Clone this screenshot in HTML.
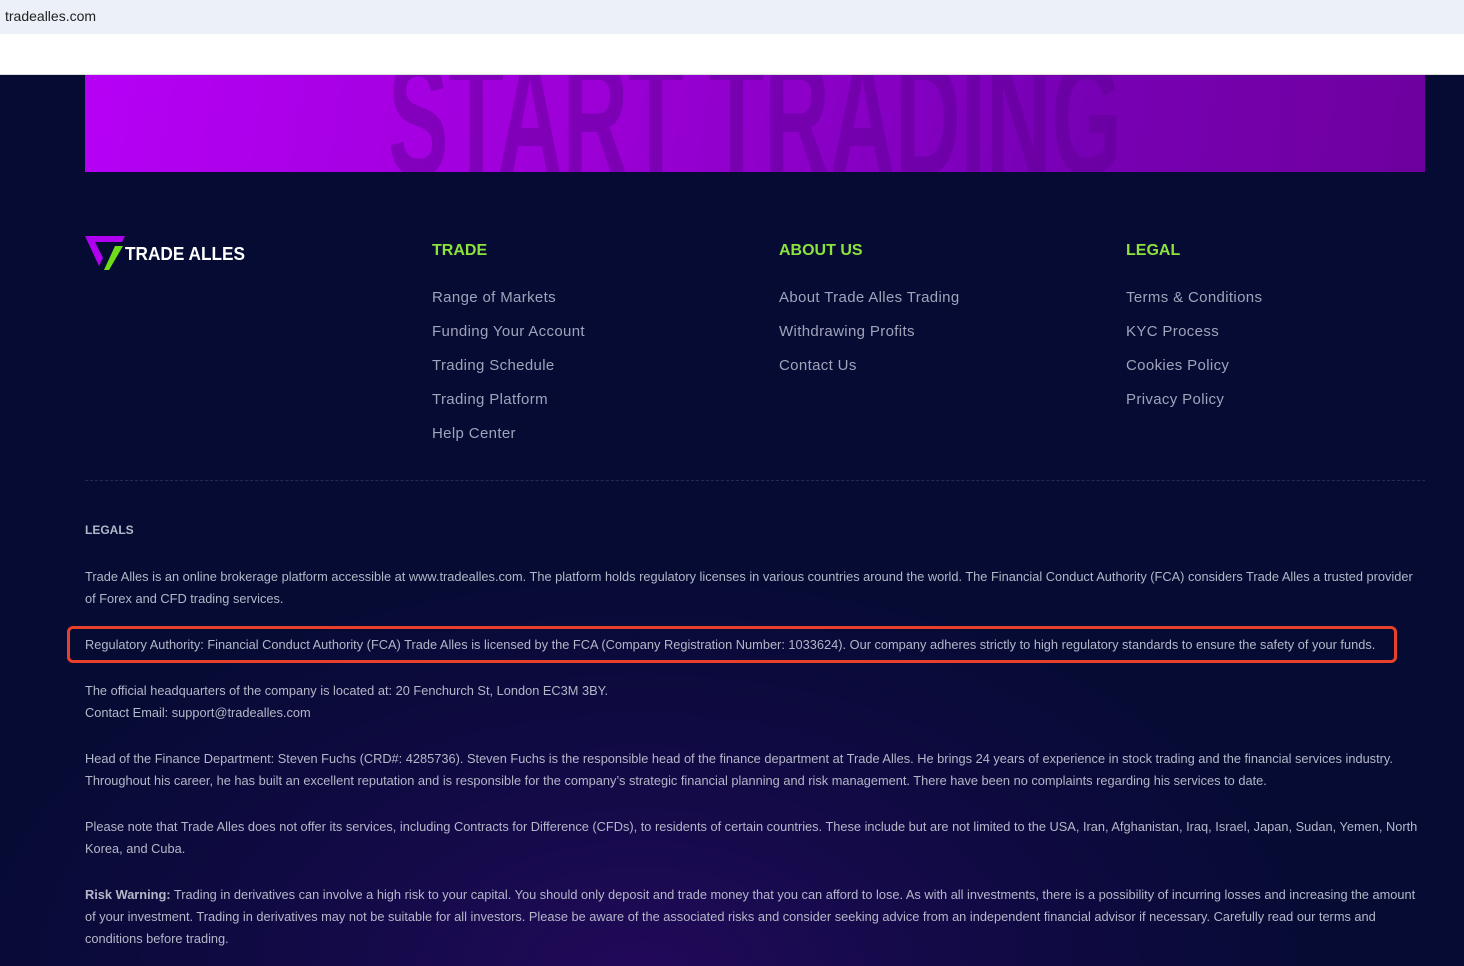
<!DOCTYPE html>
<html><head><meta charset="utf-8"><style>
*{margin:0;padding:0;box-sizing:border-box}
html,body{width:1464px;height:966px;overflow:hidden}
body{font-family:"Liberation Sans",sans-serif;background:#050b33;position:relative}
.bar{position:absolute;left:0;top:0;width:1464px;height:34px;background:#ebf0f9}
.bar span{position:absolute;left:5px;top:8px;font-size:14px;color:#222}
.white{position:absolute;left:0;top:34px;width:1464px;height:41px;background:#fff;border-bottom:1px solid #ddd}
.main{position:absolute;left:0;top:75px;width:1464px;height:891px;background:radial-gradient(ellipse 700px 420px at 640px 900px,#22095a 0%,#130a47 45%,#050b33 100%)}
.banner{position:absolute;left:85px;top:75px;width:1340px;height:97px;background:linear-gradient(100deg,#b600f6 0%,#9a00d4 40%,#7a00b8 70%,#6e009e 100%);overflow:hidden}
.logo{position:absolute;left:85px;top:236px}
.h{position:absolute;top:242px;font-size:16px;font-weight:bold;color:#8be33c}
.l{position:absolute;font-size:15px;letter-spacing:0.35px;color:#a0a3ba}
.hr{position:absolute;left:85px;top:480px;width:1340px;border-top:1px dashed #232a5a}
.t{position:absolute;left:85px;font-size:12.8px;color:#b4b7c8;white-space:nowrap}
.box{position:absolute;left:67px;top:626px;width:1330px;height:37px;border:3px solid #e8402a;border-radius:6px}
</style></head><body>
<div class="bar"><span>tradealles.com</span></div>
<div class="white"></div>
<div class="main"></div>
<div class="banner">
<svg width="1340" height="97" style="position:absolute;left:0;top:0">
<text x="303" y="100" textLength="734" lengthAdjust="spacingAndGlyphs" font-family="Liberation Sans" font-weight="bold" font-size="165" fill="#5b0090" fill-opacity="0.45">START TRADING</text>
</svg>
</div>
<div class="logo">
<svg width="170" height="36">
<polygon points="0,0 40,0 37,6 10,6 18,22 14,30" fill="#b000f0"/>
<polygon points="30,10 38,10 24,34 19,34" fill="#6fdc1a"/>
<text x="40" y="24" font-family="Liberation Sans" font-weight="bold" font-size="18" textLength="120" lengthAdjust="spacingAndGlyphs" fill="#fff">TRADE ALLES</text>
</svg>
</div>
<div class="h" style="left:432px">TRADE</div>
<div class="h" style="left:779px">ABOUT US</div>
<div class="h" style="left:1126px">LEGAL</div>
<div class="l" style="left:432px;top:289px">Range of Markets</div>
<div class="l" style="left:432px;top:323px">Funding Your Account</div>
<div class="l" style="left:432px;top:357px">Trading Schedule</div>
<div class="l" style="left:432px;top:391px">Trading Platform</div>
<div class="l" style="left:432px;top:425px">Help Center</div>
<div class="l" style="left:779px;top:289px">About Trade Alles Trading</div>
<div class="l" style="left:779px;top:323px">Withdrawing Profits</div>
<div class="l" style="left:779px;top:357px">Contact Us</div>
<div class="l" style="left:1126px;top:289px">Terms &amp; Conditions</div>
<div class="l" style="left:1126px;top:323px">KYC Process</div>
<div class="l" style="left:1126px;top:357px">Cookies Policy</div>
<div class="l" style="left:1126px;top:391px">Privacy Policy</div>
<div class="hr"></div>
<div class="t" style="top:523px;font-weight:bold;font-size:12px">LEGALS</div>
<div class="t" style="top:569px">Trade Alles is an online brokerage platform accessible at www.tradealles.com. The platform holds regulatory licenses in various countries around the world. The Financial Conduct Authority (FCA) considers Trade Alles a trusted provider</div>
<div class="t" style="top:591px">of Forex and CFD trading services.</div>
<div class="box"></div>
<div class="t" style="top:637px">Regulatory Authority: Financial Conduct Authority (FCA) Trade Alles is licensed by the FCA (Company Registration Number: 1033624). Our company adheres strictly to high regulatory standards to ensure the safety of your funds.</div>
<div class="t" style="top:683px">The official headquarters of the company is located at: 20 Fenchurch St, London EC3M 3BY.</div>
<div class="t" style="top:705px">Contact Email: support@tradealles.com</div>
<div class="t" style="top:751px">Head of the Finance Department: Steven Fuchs (CRD#: 4285736). Steven Fuchs is the responsible head of the finance department at Trade Alles. He brings 24 years of experience in stock trading and the financial services industry.</div>
<div class="t" style="top:773px">Throughout his career, he has built an excellent reputation and is responsible for the company’s strategic financial planning and risk management. There have been no complaints regarding his services to date.</div>
<div class="t" style="top:819px">Please note that Trade Alles does not offer its services, including Contracts for Difference (CFDs), to residents of certain countries. These include but are not limited to the USA, Iran, Afghanistan, Iraq, Israel, Japan, Sudan, Yemen, North</div>
<div class="t" style="top:841px">Korea, and Cuba.</div>
<div class="t" style="top:887px"><b>Risk Warning:</b> Trading in derivatives can involve a high risk to your capital. You should only deposit and trade money that you can afford to lose. As with all investments, there is a possibility of incurring losses and increasing the amount</div>
<div class="t" style="top:909px">of your investment. Trading in derivatives may not be suitable for all investors. Please be aware of the associated risks and consider seeking advice from an independent financial advisor if necessary. Carefully read our terms and</div>
<div class="t" style="top:931px">conditions before trading.</div>
</body></html>
